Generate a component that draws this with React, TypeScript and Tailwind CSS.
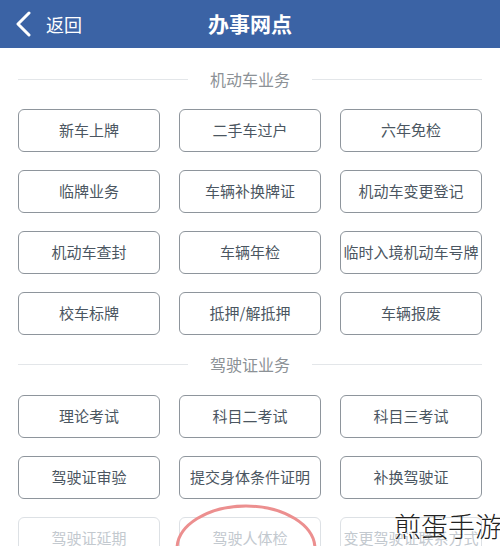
const vehicle = [
  "新车上牌",
  "二手车过户",
  "六年免检",
  "临牌业务",
  "车辆补换牌证",
  "机动车变更登记",
  "机动车查封",
  "车辆年检",
  "临时入境机动车号牌",
  "校车标牌",
  "抵押/解抵押",
  "车辆报废",
];

const license = [
  "理论考试",
  "科目二考试",
  "科目三考试",
  "驾驶证审验",
  "提交身体条件证明",
  "补换驾驶证",
];

const faded = ["驾驶证延期", "驾驶人体检", "变更驾驶证联系方式"];

const font = { fontFamily: '"Noto Sans CJK SC", "Noto Sans", sans-serif' };

const SectionTitle = ({ label }: { label: string }) => (
  <div className="flex items-center px-[18px] h-[24px]">
    <div className="flex-1 h-px bg-[#e3e6e9]" />
    <div className="px-[22px] text-[16px] leading-[24px] text-[#8c9196]">{label}</div>
    <div className="flex-1 h-px bg-[#e3e6e9]" />
  </div>
);

const Tile = ({ label, dim }: { label: string; dim?: boolean }) => (
  <div
    className={
      dim
        ? "h-[43px] rounded-[6px] border border-[#dde1e5] flex items-center justify-center text-[15px] text-[#c3c9cf] whitespace-nowrap"
        : "h-[43px] rounded-[6px] border border-[#8e959c] flex items-center justify-center text-[15px] text-[#4b5661] whitespace-nowrap"
    }
  >
    {label}
  </div>
);

export default function App() {
  return (
    <div className="relative w-[500px] h-[546px] overflow-hidden bg-white" style={font}>
      <div className="h-[48px] bg-[#3b63a5] flex items-center relative">
        <div className="flex items-center pl-[14px] gap-[12px] text-white">
          <svg width="20" height="26" viewBox="0 0 20 26" fill="none">
            <path d="M15 2 L4 13 L15 24" stroke="white" strokeWidth="3" strokeLinecap="round" strokeLinejoin="round" />
          </svg>
          <span className="text-[18px] leading-none">返回</span>
        </div>
        <div className="absolute inset-0 flex items-center justify-center text-white text-[21px] font-bold pointer-events-none">
          办事网点
        </div>
      </div>

      <div className="pt-[19px]">
        <SectionTitle label="机动车业务" />
        <div className="grid grid-cols-3 gap-x-[19px] gap-y-[18px] px-[18px] mt-[18px]">
          {vehicle.map((v) => (
            <Tile key={v} label={v} />
          ))}
        </div>
        <div className="mt-[17px]">
          <SectionTitle label="驾驶证业务" />
        </div>
        <div className="grid grid-cols-3 gap-x-[19px] gap-y-[18px] px-[18px] mt-[19px]">
          {license.map((v) => (
            <Tile key={v} label={v} />
          ))}
          {faded.map((v) => (
            <Tile key={v} label={v} dim />
          ))}
        </div>
      </div>

      <svg className="absolute left-0 top-0 pointer-events-none" width="500" height="546">
        <ellipse cx="246" cy="549" rx="69" ry="43" fill="none" stroke="#ec8f8f" strokeWidth="3" />
      </svg>

      <div className="absolute right-[-2px] top-[508px] text-[27px] leading-[36px] text-[#222] font-light">
        煎蛋手游
      </div>
    </div>
  );
}
